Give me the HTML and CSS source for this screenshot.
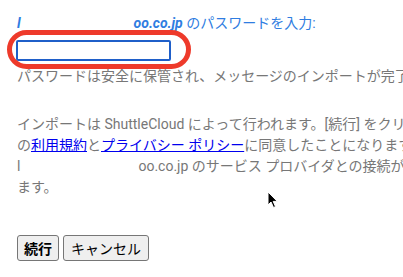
FILE: index.html
```html
<!DOCTYPE html>
<html>
    <head>
        <title>パスワードを入力</title>
        <link rel="stylesheet" href="styles.css">
    </head>
    <body>

        <div class="container">
            <p class="label"><span class="email">l<span class="hidden"></span>oo.co.jp</span> のパスワードを入力:</p>

            <div class="field">
                <input type="password" class="password" />
                <div class="ring"></div>
            </div>

            <p class="note">パスワードは安全に保管され、メッセージのインポートが完了すると削除されます。</p>

            <p class="terms">
                インポートは ShuttleCloud によって行われます。[続行] をクリックすると、ShuttleCloud<br/>
                の<a href="#">利用規約</a>と<a href="#">プライバシー ポリシー</a>に同意したことになります。<br/>
                l<span class="hidden hidden2"></span>oo.co.jp のサービス プロバイダとの接続が時々切断され<br/>
                ます。
            </p>

            <div class="buttons">
                <button class="btn primary">続行</button>
                <button class="btn">キャンセル</button>
            </div>
        </div>

        <svg class="cursor" width="12" height="18" viewBox="0 0 12 18">
            <path d="M1 1 L1 14 L4 11 L6.5 16.5 L8.5 15.6 L6.2 10.4 L10.3 10.4 Z" fill="#000" stroke="#fff" stroke-width="1"/>
        </svg>

    </body>
</html>
```

FILE: styles.css
```css
body{
    font-family: Roboto, "Noto Sans CJK JP", sans-serif;
    background-color: #fff;
    color: #777;

    margin: 0;
    padding: 0;
    overflow: hidden;
}

.container{
    width: 700px;
    padding: 13px 17px;

    display: flex;
    flex-direction: column;
    align-items: flex-start;
}

p{
    margin: 0;
    font-size: 14px;
    line-height: 21px;
    white-space: nowrap;
}

.label{
    color: #2f7de1;
}

.label .email{
    font-weight: bold;
    font-style: italic;
}

.hidden{
    display: inline-block;
    width: 113px;
    height: 1px;
}

.hidden2{
    width: 118px;
}

.field{
    margin-top: 6px;
    margin-left: -1px;
    position: relative;
}

.password{
    box-sizing: border-box;
    width: 155px;
    height: 21px;
    border: 2px solid #1f5fc9;
    border-radius: 2px;
    outline: none;
    display: block;
}

.ring{
    position: absolute;
    left: -9px;
    top: -10px;
    width: 184px;
    height: 39px;

    border: 5px solid #ee3a2b;
    border-radius: 22px;
    box-sizing: border-box;
}

.note{
    margin-top: 5px;
}

.terms{
    margin-top: 27px;
}

.terms a{
    color: #0000ee;
}

.buttons{
    margin-top: 37px;
    display: flex;
    gap: 4px;
}

.btn{
    font-family: Roboto, "Noto Sans CJK JP", sans-serif;
    font-size: 14px;
    color: #000;
    background-color: #efefef;
    border: 1px solid #767676;
    border-radius: 3px;

    height: 26px;
    padding: 0 7px;
}

.btn.primary{
    font-weight: bold;
    padding: 0 6px;
}

.cursor{
    position: absolute;
    left: 267px;
    top: 191px;
}
```
